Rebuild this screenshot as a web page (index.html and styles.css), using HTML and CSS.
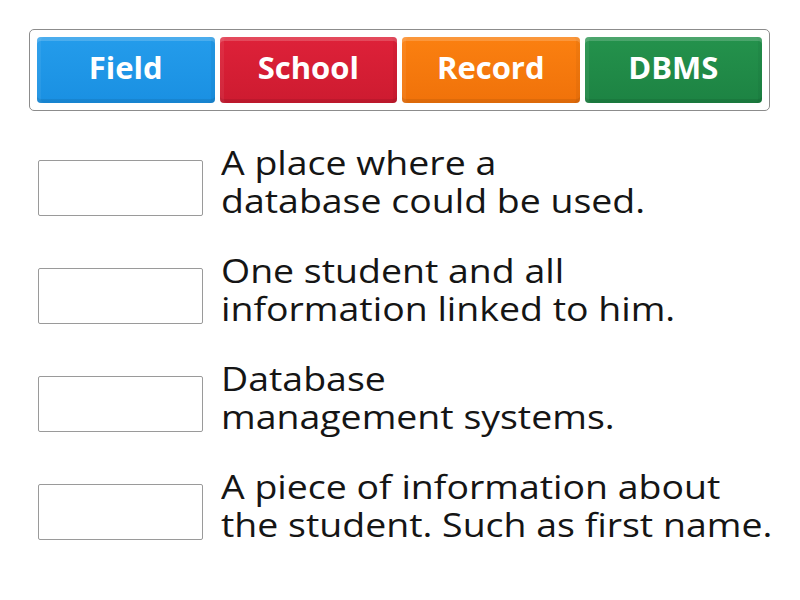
FILE: index.html
```html
<!DOCTYPE html>
<html>
<head>
<meta charset="utf-8">
<link rel="stylesheet" href="styles.css">
</head>
<body>
<div class="bank">
  <div class="tile tile-blue">Field</div>
  <div class="tile tile-red">School</div>
  <div class="tile tile-orange">Record</div>
  <div class="tile tile-green">DBMS</div>
</div>
<div class="rows">
  <div class="row">
    <div class="slot"></div>
    <div class="clue">A place where a<br>database could be used.</div>
  </div>
  <div class="row">
    <div class="slot"></div>
    <div class="clue">One student and all<br>information linked to him.</div>
  </div>
  <div class="row">
    <div class="slot"></div>
    <div class="clue">Database<br>management systems.</div>
  </div>
  <div class="row">
    <div class="slot"></div>
    <div class="clue">A piece of information about<br>the student. Such as first name.</div>
  </div>
</div>
</body>
</html>
```
FILE: styles.css
```css
html, body {
  margin: 0;
  padding: 0;
  background: #fff;
}
body {
  font-family: "Open Sans", "Noto Sans", sans-serif;
  width: 800px;
  height: 600px;
  overflow: hidden;
}
.bank {
  box-sizing: border-box;
  margin: 29px 0 0 29px;
  width: 741px;
  height: 82px;
  padding: 7px;
  border: 1px solid #8c8c8c;
  border-radius: 5px;
  display: flex;
  gap: 5px;
}
.tile {
  box-sizing: border-box;
  flex: 1;
  height: 66px;
  padding-bottom: 7px;
  border-radius: 4px;
  color: #fff;
  font-weight: 700;
  font-size: 31px;
  display: flex;
  align-items: center;
  justify-content: center;
  box-shadow: inset 0 4px 0 rgba(255,255,255,0.18), inset 0 -4px 0 rgba(0,0,0,0.08), inset 4px 0 0 rgba(255,255,255,0.06), inset -4px 0 0 rgba(0,0,0,0.04);
}
.tile-blue { background: linear-gradient(#249ceb, #1a90e2); }
.tile-red { background: linear-gradient(#de2139, #cd1b30); }
.tile-orange { background: linear-gradient(#fb8010, #f0720a); }
.tile-green { background: linear-gradient(#24924c, #1d8343); }
.rows {
  margin-top: 33px;
  display: flex;
  flex-direction: column;
}
.row {
  display: flex;
  align-items: flex-start;
  height: 108px;
}
.slot {
  box-sizing: border-box;
  margin: 16px 0 0 38px;
  width: 165px;
  height: 56px;
  border: 1px solid #9a9a9a;
  border-radius: 2px;
  background: #fff;
}
.clue {
  margin-left: 18px;
  font-size: 33px;
  line-height: 38px;
  color: #151515;
  white-space: nowrap;
  transform: scaleX(1.135);
  transform-origin: left top;
}
```
